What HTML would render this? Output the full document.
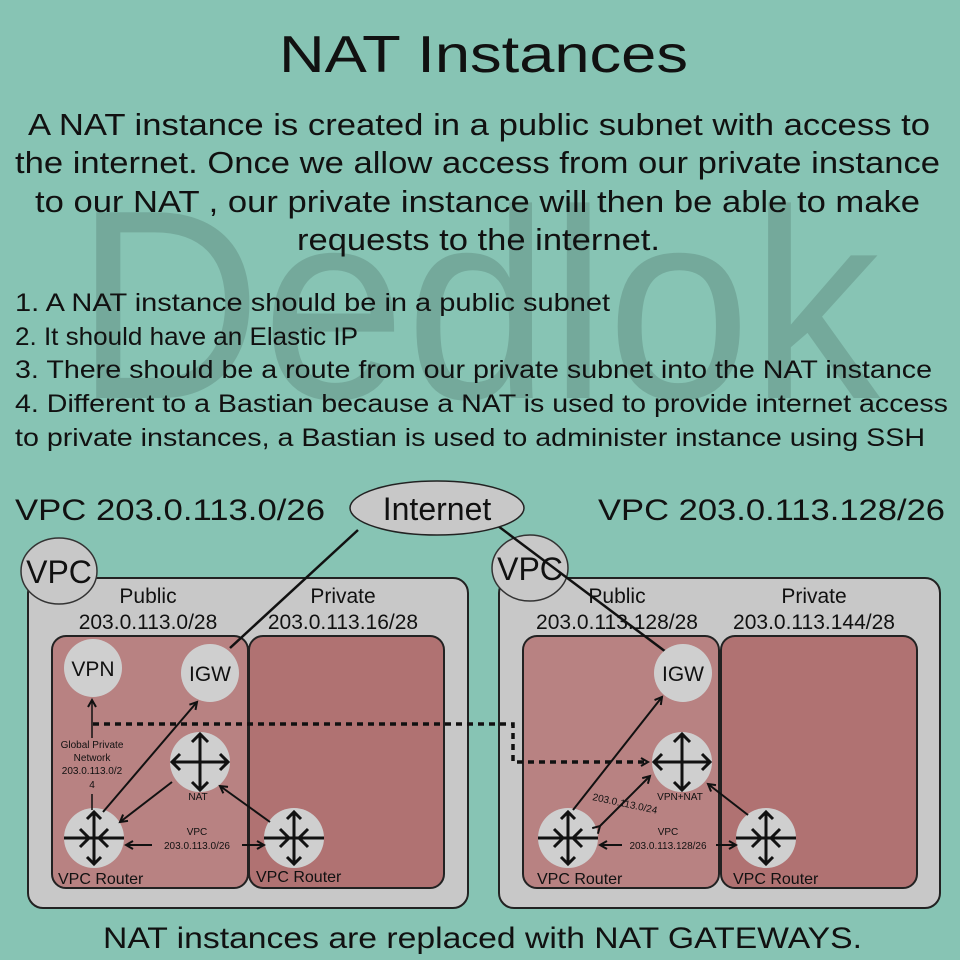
<!DOCTYPE html>
<html><head><meta charset="utf-8"><style>
html,body{margin:0;padding:0;background:#87c4b4;}
svg{display:block;font-family:"Liberation Sans",sans-serif;}
</style></head><body>
<svg width="960" height="960" viewBox="0 0 960 960" xmlns="http://www.w3.org/2000/svg">
<defs>
<marker id="ah" markerWidth="10" markerHeight="10" refX="8" refY="5" orient="auto" markerUnits="userSpaceOnUse"><path d="M1,1 L8,5 L1,9" fill="none" stroke="#111" stroke-width="2"/></marker>
<g id="router">
<circle r="30" fill="#cfcfcf"/>
<path d="M-30,0 H30 M0,-26 V26 M-7,-19 L0,-26 L7,-19 M-7,19 L0,26 L7,19 M-14,-9 L-5,0 L-14,9 M14,-9 L5,0 L14,9" stroke="#111" stroke-width="3" fill="none"/>
</g>
<g id="nat">
<circle r="30" fill="#cfcfcf"/>
<path d="M-28,0 H28 M0,-28 V28 M-20,-8 L-28,0 L-20,8 M20,-8 L28,0 L20,8 M-8,-20 L0,-28 L8,-20 M-8,20 L0,28 L8,20" stroke="#111" stroke-width="3" fill="none"/>
</g>
</defs>
<rect width="960" height="960" fill="#87c4b4"/>
<text x="75" y="398" font-size="270" fill="#74a99b" textLength="805" lengthAdjust="spacingAndGlyphs">Dedlok</text>

<text x="279" y="72" font-size="52" fill="#111" textLength="409" lengthAdjust="spacingAndGlyphs">NAT  Instances</text>
<g font-size="31" fill="#111">
<text x="28" y="135" textLength="902" lengthAdjust="spacingAndGlyphs">A NAT instance is created in a public subnet with access to</text>
<text x="15" y="173" textLength="925" lengthAdjust="spacingAndGlyphs">the internet. Once we allow access from our private instance</text>
<text x="35" y="212" textLength="885" lengthAdjust="spacingAndGlyphs">to our NAT  , our private instance will then be able to make</text>
<text x="297" y="250" textLength="363" lengthAdjust="spacingAndGlyphs">requests to the internet.</text>
</g>
<g font-size="25" fill="#111">
<text x="15" y="311" textLength="595" lengthAdjust="spacingAndGlyphs">1. A NAT instance should  be in a public subnet</text>
<text x="15" y="345" textLength="343" lengthAdjust="spacingAndGlyphs">2. It should have an Elastic IP</text>
<text x="15" y="378" textLength="917" lengthAdjust="spacingAndGlyphs">3. There should be a route from our private subnet into the NAT instance</text>
<text x="15" y="412" textLength="933" lengthAdjust="spacingAndGlyphs">4. Different to a Bastian because a NAT is used to provide internet access</text>
<text x="15" y="446" textLength="910" lengthAdjust="spacingAndGlyphs">to private instances, a Bastian is used to administer instance using SSH</text>
</g>
<g font-size="30" fill="#111">
<text x="15" y="520" textLength="310" lengthAdjust="spacingAndGlyphs">VPC 203.0.113.0/26</text>
<text x="598" y="520" textLength="347" lengthAdjust="spacingAndGlyphs">VPC 203.0.113.128/26</text>
</g>

<rect x="28" y="578" width="440" height="330" rx="15" fill="#c8c8c8" stroke="#222" stroke-width="2"/>
<rect x="52" y="636" width="196" height="252" rx="14" fill="#b88282" stroke="#222" stroke-width="2"/>
<rect x="249" y="636" width="195" height="252" rx="14" fill="#b07272" stroke="#222" stroke-width="2"/>
<ellipse cx="59" cy="571" rx="38" ry="33" fill="#c8c8c8" stroke="#333" stroke-width="1.5"/>
<text x="59" y="583" font-size="32" text-anchor="middle" fill="#111">VPC</text>
<g font-size="21" fill="#111" text-anchor="middle">
<text x="148" y="603">Public</text><text x="148" y="629">203.0.113.0/28</text>
<text x="343" y="603">Private</text><text x="343" y="629">203.0.113.16/28</text>
</g>

<rect x="499" y="578" width="441" height="330" rx="15" fill="#c8c8c8" stroke="#222" stroke-width="2"/>
<rect x="523" y="636" width="196" height="252" rx="14" fill="#b88282" stroke="#222" stroke-width="2"/>
<rect x="721" y="636" width="196" height="252" rx="14" fill="#b07272" stroke="#222" stroke-width="2"/>
<ellipse cx="530" cy="568" rx="38" ry="33" fill="#c8c8c8" stroke="#333" stroke-width="1.5"/>
<text x="530" y="580" font-size="32" text-anchor="middle" fill="#111">VPC</text>
<g font-size="21" fill="#111" text-anchor="middle">
<text x="617" y="603">Public</text><text x="617" y="629">203.0.113.128/28</text>
<text x="814" y="603">Private</text><text x="814" y="629">203.0.113.144/28</text>
</g>

<line x1="358" y1="530" x2="230" y2="648" stroke="#111" stroke-width="2.5"/>
<line x1="490" y1="520" x2="666" y2="652" stroke="#111" stroke-width="2.5"/>
<ellipse cx="437" cy="508" rx="87" ry="27" fill="#c8c8c8" stroke="#222" stroke-width="1.5"/>
<text x="437" y="520" font-size="32" text-anchor="middle" fill="#111">Internet</text>

<circle cx="93" cy="668" r="29" fill="#cfcfcf"/><text x="93" y="676" font-size="21" text-anchor="middle" fill="#111">VPN</text>
<circle cx="210" cy="673" r="29" fill="#cfcfcf"/><text x="210" y="681" font-size="21" text-anchor="middle" fill="#111">IGW</text>
<use href="#nat" x="200" y="762"/>
<use href="#router" x="94" y="838"/>
<use href="#router" x="294" y="838"/>
<path d="M93,724 H513 V762 H648" fill="none" stroke="#111" stroke-width="3.5" stroke-dasharray="6,5" marker-end="url(#ah)"/>
<line x1="92" y1="738" x2="92" y2="700" stroke="#111" stroke-width="1.5" marker-end="url(#ah)"/>
<line x1="92" y1="810" x2="92" y2="794" stroke="#111" stroke-width="1.5"/>
<g font-size="10" fill="#111" text-anchor="middle">
<text x="92" y="748">Global Private</text><text x="92" y="761">Network</text><text x="92" y="774">203.0.113.0/2</text><text x="92" y="788">4</text>
</g>
<line x1="103" y1="812" x2="197" y2="702" stroke="#111" stroke-width="2" marker-end="url(#ah)"/>
<line x1="172" y1="782" x2="120" y2="822" stroke="#111" stroke-width="2" marker-end="url(#ah)"/>
<line x1="270" y1="822" x2="220" y2="786" stroke="#111" stroke-width="2" marker-end="url(#ah)"/>
<text x="198" y="800" font-size="10" text-anchor="middle" fill="#111">NAT</text>
<line x1="152" y1="845" x2="126" y2="845" stroke="#111" stroke-width="2" marker-end="url(#ah)"/>
<line x1="242" y1="845" x2="264" y2="845" stroke="#111" stroke-width="2" marker-end="url(#ah)"/>
<text x="197" y="835" font-size="10" text-anchor="middle" fill="#111">VPC</text>
<text x="197" y="849" font-size="10" text-anchor="middle" fill="#111">203.0.113.0/26</text>
<text x="58" y="884" font-size="16" fill="#111">VPC Router</text>
<text x="256" y="882" font-size="16" fill="#111">VPC Router</text>

<circle cx="683" cy="673" r="29" fill="#cfcfcf"/><text x="683" y="681" font-size="21" text-anchor="middle" fill="#111">IGW</text>
<use href="#nat" x="682" y="762"/>
<use href="#router" x="568" y="838"/>
<use href="#router" x="766" y="838"/>
<line x1="573" y1="810" x2="662" y2="697" stroke="#111" stroke-width="2" marker-end="url(#ah)"/>
<line x1="600" y1="826" x2="650" y2="776" stroke="#111" stroke-width="2" marker-end="url(#ah)" marker-start="url(#ah)"/>
<line x1="748" y1="815" x2="708" y2="784" stroke="#111" stroke-width="2" marker-end="url(#ah)"/>
<text x="680" y="800" font-size="10" text-anchor="middle" fill="#111">VPN+NAT</text>
<text x="592" y="800" font-size="10" fill="#111" transform="rotate(12 592 800)">203.0.113.0/24</text>
<line x1="622" y1="845" x2="600" y2="845" stroke="#111" stroke-width="2" marker-end="url(#ah)"/>
<line x1="716" y1="845" x2="736" y2="845" stroke="#111" stroke-width="2" marker-end="url(#ah)"/>
<text x="668" y="835" font-size="10" text-anchor="middle" fill="#111">VPC</text>
<text x="668" y="849" font-size="10" text-anchor="middle" fill="#111">203.0.113.128/26</text>
<text x="537" y="884" font-size="16" fill="#111">VPC Router</text>
<text x="733" y="884" font-size="16" fill="#111">VPC Router</text>

<text x="103" y="948" font-size="30" fill="#111" textLength="759" lengthAdjust="spacingAndGlyphs">NAT instances are replaced with NAT GATEWAYS.</text>
</svg>
</body></html>
